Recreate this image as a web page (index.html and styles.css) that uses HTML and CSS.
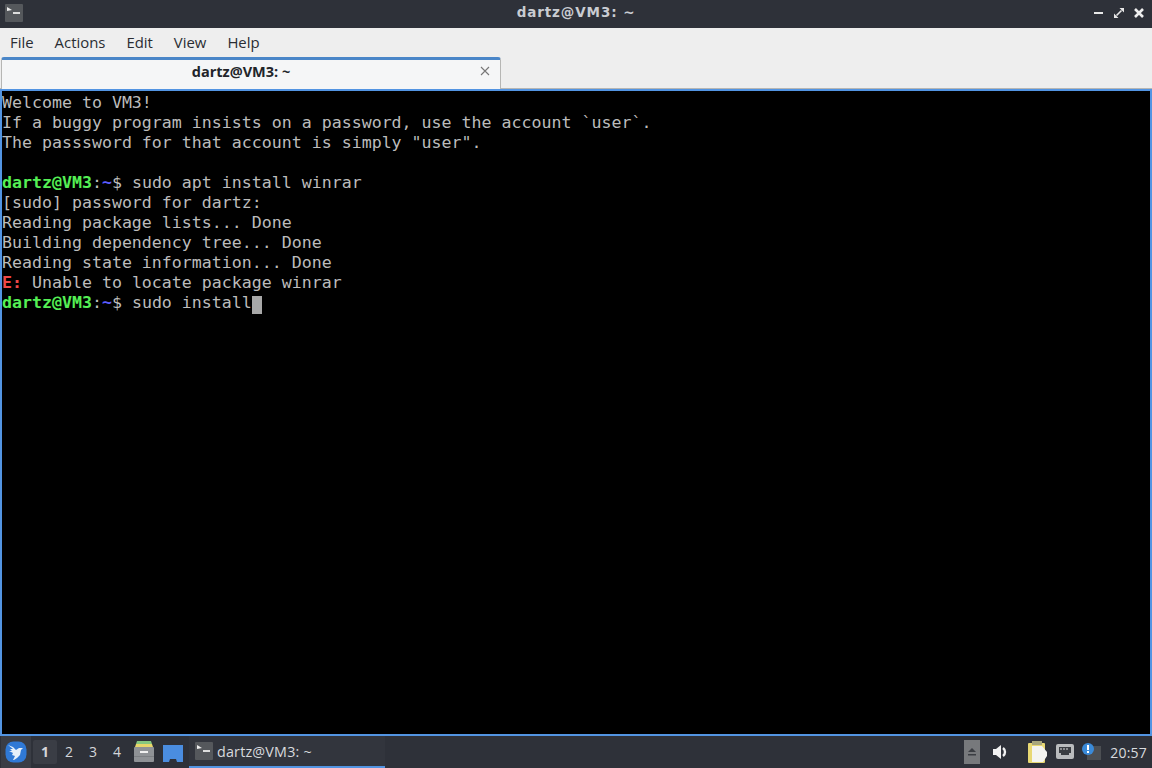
FILE: index.html
```html
<!DOCTYPE html>
<html lang="en">
<head>
<meta charset="utf-8">
<title>dartz@VM3: ~</title>
<link rel="stylesheet" href="styles.css">
</head>
<body>
<div class="window">
  <header class="titlebar">
    <svg class="app-icon" width="18" height="18" viewBox="0 0 18 18"><rect width="18" height="18" rx="1" fill="#55585c"/><path d="M2 3l5 3-5 1z" fill="#eee"/><rect x="8" y="8" width="7" height="2" fill="#ddd"/></svg>
    <div class="title">dartz@VM3: ~</div>
    <div class="controls">
      <svg width="12" height="12" viewBox="0 0 12 12"><rect x="1" y="5" width="9" height="2" fill="#e8e8e8"/></svg>
      <svg width="12" height="12" viewBox="0 0 12 12"><path d="M6.5 1H11v4.5zM1 6.5L5.5 11H1z" fill="#e8e8e8"/><path d="M3.5 8.5l5-5" stroke="#e8e8e8" stroke-width="1.6"/></svg>
      <svg width="12" height="12" viewBox="0 0 12 12"><path d="M2 2l8 8M10 2l-8 8" stroke="#eee" stroke-width="2.6"/></svg>
    </div>
  </header>
  <nav class="menubar">
    <span>File</span><span>Actions</span><span>Edit</span><span>View</span><span>Help</span>
  </nav>
  <div class="tabbar">
    <div class="tab">
      <span class="tab-label">dartz@VM3: ~</span>
      <svg class="tab-close" width="10" height="10" viewBox="0 0 10 10"><path d="M1 1l8 8M9 1l-8 8" stroke="#777" stroke-width="1.1"/></svg>
    </div>
  </div>
  <main class="terminal"><pre class="screen">Welcome to VM3!
If a buggy program insists on a password, use the account `user`.
The passsword for that account is simply "user".

<b class="green">dartz@VM3</b>:<b class="blue">~</b>$ sudo apt install winrar
[sudo] password for dartz:
Reading package lists... Done
Building dependency tree... Done
Reading state information... Done
<b class="red">E:</b> Unable to locate package winrar
<b class="green">dartz@VM3</b>:<b class="blue">~</b>$ sudo install<span class="cursor"> </span></pre></main>
  <footer class="panel">
    <div class="start">
      <svg width="22" height="22" viewBox="0 0 22 22"><rect x="0.5" y="0.5" width="21" height="21" rx="8" fill="#2f79d6"/><path d="M3 4l5 2 3 3 3-2 4 0-2 2-1 5-3 3-3 2-1 0 2-4-3-1 1-2-4-2 3 0-2-2 3 0z" fill="#e6f0fa"/></svg>
    </div>
    <div class="desktops">
      <span class="desk active">1</span><span class="desk">2</span><span class="desk">3</span><span class="desk">4</span>
    </div>
    <div class="launchers">
      <svg width="22" height="24" viewBox="0 0 22 24"><path d="M4 1h14l1 3H3z" fill="#86c77f"/><path d="M3 4h16l1 3H2z" fill="#e8d66a"/><rect x="1" y="7" width="20" height="15" rx="1" fill="#8f9296"/><rect x="7" y="11" width="8" height="2" fill="#f0f0f0"/><rect x="1" y="16" width="20" height="1" fill="#7c7f83"/></svg>
      <svg width="22" height="24" viewBox="0 0 22 24"><path d="M1 5h20v17h-6l-1-3H8l-1 3H1z" fill="#4a8de0"/></svg>
    </div>
    <div class="task">
      <svg width="18" height="18" viewBox="0 0 18 18"><rect width="18" height="18" rx="1" fill="#55585c"/><path d="M2 3l5 3-5 1z" fill="#eee"/><rect x="8" y="8" width="7" height="2" fill="#ddd"/></svg>
      <span>dartz@VM3: ~</span>
    </div>
    <div class="tray">
      <svg class="tray-up" width="16" height="24" viewBox="0 0 16 24"><rect width="16" height="24" fill="#77797c"/><path d="M8 8l4 4H4z" fill="#3a3d42"/><rect x="4" y="14" width="8" height="1.5" fill="#3a3d42"/></svg>
      <svg class="tray-sound" width="18" height="18" viewBox="0 0 18 18"><path d="M1 6h3l5-4v14l-5-4H1z" fill="#f2f2f2"/><path d="M11 5a5 5 0 0 1 0 8" fill="none" stroke="#f2f2f2" stroke-width="2.4"/></svg>
      <svg class="tray-clip" width="22" height="24" viewBox="0 0 22 24"><rect x="1" y="3" width="17" height="20" rx="1" fill="#e8d873"/><rect x="5" y="1" width="10" height="4" fill="#a8a67c"/><path d="M5 6h10l5 6v4l-4 6H5z" fill="#f4f4f0"/></svg>
      <svg class="tray-net" width="20" height="18" viewBox="0 0 20 18"><rect x="1" y="1" width="18" height="15" rx="2" fill="#b9bbbd"/><path d="M4 4h12v6h-2v2H6v-2H4z" fill="#3a3d42"/><path d="M6 5v2M9 5v2M12 5v2" stroke="#ddd"/></svg>
      <svg class="tray-alert" width="20" height="20" viewBox="0 0 20 20"><rect x="6" y="4" width="14" height="14" fill="#4c4f53"/><circle cx="7" cy="7" r="6" fill="#3a8ad8"/><rect x="6" y="3" width="2" height="5" fill="#fff"/><rect x="6" y="9" width="2" height="2" fill="#fff"/></svg>
      <span class="clock">20:57</span>
    </div>
  </footer>
</div>
</body>
</html>
```
FILE: styles.css
```css
* { box-sizing: border-box; }
html, body { margin: 0; height: 100%; overflow: hidden; }
.window {
  width: 1152px; height: 768px;
  display: flex; flex-direction: column;
  font-family: "Open Sans", "Noto Sans", sans-serif;
  background: #eeeeee;
}
.titlebar {
  height: 28px; flex: none;
  background: #2e3139;
  display: flex; align-items: center;
  padding: 0 7px 0 5px;
  position: relative;
}
.app-icon { flex: none; margin-bottom: 2px; }
.title {
  position: absolute; left: 0; right: 0; top: 3px;
  text-align: center;
  font-family: "DejaVu Sans", sans-serif;
  color: #c9ccd2; font-size: 13.5px; font-weight: 700; line-height: 18px;
  letter-spacing: 0.9px;
}
.controls { margin-left: auto; display: flex; gap: 8px; align-items: center; margin-bottom: 3px; }
.menubar {
  height: 29px; flex: none;
  display: flex; align-items: center;
  padding: 0 0 2px 10px; gap: 21px;
  background: #eeeeee; color: #2a2d33;
  font-size: 14.9px;
}
.tabbar {
  height: 32px; flex: none;
  background: #eeeeee;
  border-bottom: 1px solid #b6b6b4;
  display: flex;
  padding: 0 0 0 1px;
}
.tab {
  width: 500px; height: 32px;
  background: #f5f6f7;
  border-top: 3px solid #4a86c8;
  border-left: 1px solid #b6b6b4;
  border-right: 1px solid #b6b6b4;
  border-radius: 3px 3px 0 0;
  display: flex; align-items: center;
  position: relative;
}
.tab-label {
  width: 478px; text-align: center;
  font-size: 14.5px; font-weight: 700; color: #22252a;
  padding-bottom: 7px;
}
.tab-close { position: absolute; right: 10px; top: 6px; }
.terminal {
  flex: 1; min-height: 0;
  background: #000;
  border: 2px solid #5294e2;
}
.screen {
  margin: 0; padding: 2px 0 0;
  font-family: "DejaVu Sans Mono", monospace;
  font-size: 16.6px; line-height: 20px;
  color: #bcbcbc;
}
.screen b { font-weight: 700; }
.green { color: #55f055; }
.blue { color: #5c5cff; }
.red { color: #ee4848; }
.cursor { background: #a8a8a8; display: inline-block; width: 10px; height: 18px; vertical-align: -3px; }
.panel {
  height: 32px; flex: none;
  background: #2e3139;
  display: flex; align-items: center;
  color: #d8dade; font-size: 14px;
}
.start {
  width: 30px; height: 32px; margin-left: 1px; flex: none;
  background: #3a3d45;
  display: flex; align-items: center; justify-content: center;
}
.desktops { display: flex; margin-left: 2px; }
.desk { width: 24px; text-align: center; font-size: 14px; line-height: 24px; color: #d4d6da; }
.desk.active { background: #3a3d45; font-weight: 700; border-radius: 2px; }
.launchers { display: flex; gap: 7px; margin-left: 4px; }
.task {
  width: 196px; height: 32px; margin-left: 5px;
  display: flex; align-items: center; gap: 4px;
  padding-left: 6px;
  border-bottom: 2px solid #5294e2;
  background: #32353d;
}
.task span { font-size: 14.3px; letter-spacing: 0.2px; }
.tray { margin-left: auto; display: flex; align-items: center; padding-right: 5px; }
.tray-up { margin-right: 12px; }
.tray-sound { margin-right: 17px; }
.tray-clip { margin-right: 6px; }
.tray-net { margin-right: 6px; }
.tray-alert { margin-right: 9px; }
.clock { font-size: 14px; letter-spacing: 0.2px; }
```
